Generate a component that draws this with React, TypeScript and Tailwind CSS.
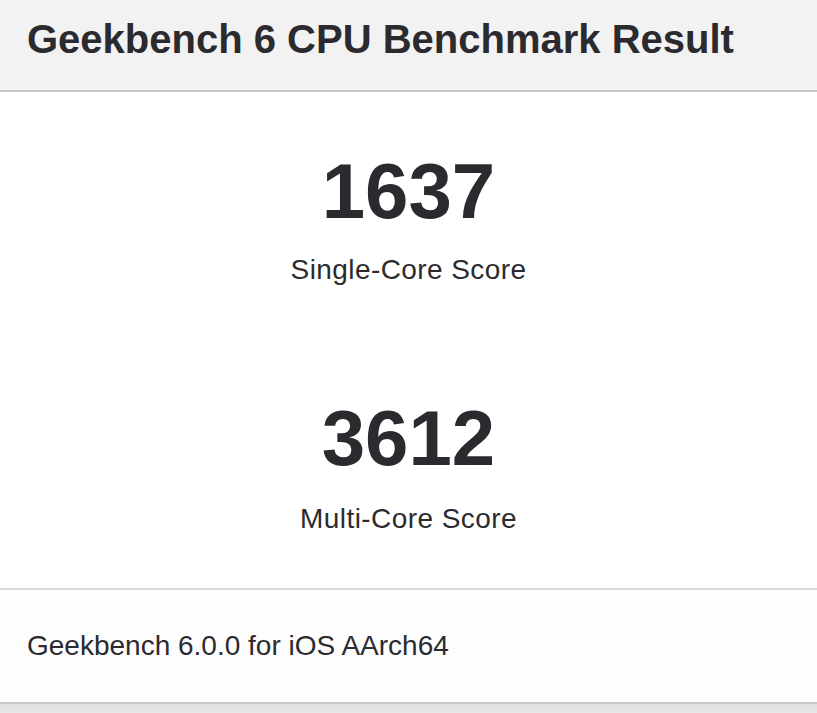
export default function App() {
  const font = { fontFamily: '"Liberation Sans", Arial, sans-serif' };
  return (
    <div className="w-[817px] h-[713px] bg-[#e6e6e6] text-[#2b2b2f] overflow-hidden" style={font}>
      <div className="h-[92px] bg-[#f2f2f2] border-b-2 border-[#c9c9c9] pl-[27px] pt-[19px]">
        <h1 className="text-[40px] leading-[40px] font-bold whitespace-nowrap">Geekbench 6 CPU Benchmark Result</h1>
      </div>
      <div className="bg-white border-b-2 border-[#dcdcdc] pt-[60px] pb-[55px] flex flex-col items-center">
        <div className="text-[78px] leading-[78px] font-bold">1637</div>
        <div className="mt-[26px] text-[28px] leading-[28px] tracking-[0.015em]">Single-Core Score</div>
        <div className="mt-[115px] text-[78px] leading-[78px] font-bold">3612</div>
        <div className="mt-[28px] text-[28px] leading-[28px] tracking-[0.015em]">Multi-Core Score</div>
      </div>
      <div className="bg-[#fdfdfd] border-b-2 border-[#c8c8c8] pl-[27px] pt-[42px] pb-[42px]">
        <div className="text-[28px] leading-[28px] whitespace-nowrap">Geekbench 6.0.0 for iOS AArch64</div>
      </div>
      <div className="h-[9px] bg-gradient-to-b from-[#e0e0e0] to-[#e8e8e8]"></div>
    </div>
  );
}
